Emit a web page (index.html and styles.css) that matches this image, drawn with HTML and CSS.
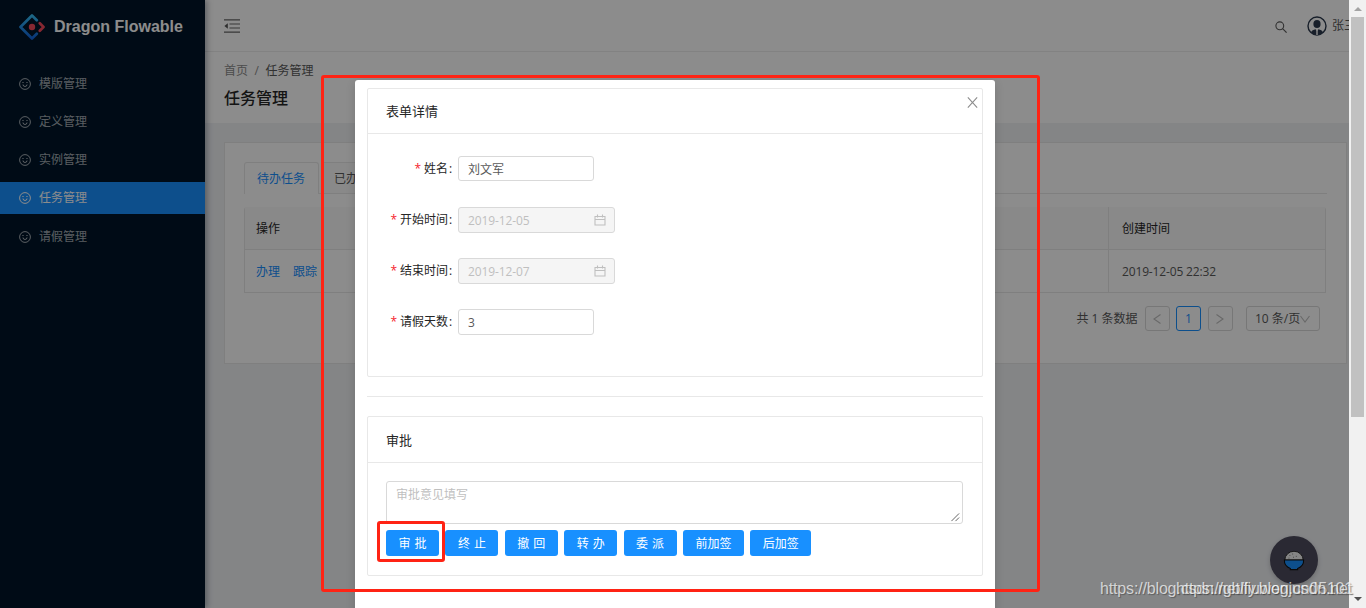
FILE: index.html
```html
<!DOCTYPE html>
<html lang="zh-CN">
<head>
<meta charset="utf-8">
<title>Dragon Flowable</title>
<link rel="stylesheet" href="styles.css">
</head>
<body>
<svg width="0" height="0" class="defs">
  <symbol id="smile" viewBox="0 0 12 12"><circle cx="6" cy="6" r="5.4" fill="none" stroke="currentColor"/><path d="M4 6.500a2 2 0 0 0 4 0" fill="none" stroke="currentColor"/><path d="M3.400 4.500h1.200M7.400 4.500h1.200" stroke="currentColor"/></symbol>
  <symbol id="calendar" viewBox="0 0 12 12"><path d="M1 2.500h10v8.500H1zM1 5.500h10M3.500.5v3M8.500.5v3" fill="none" stroke="currentColor" stroke-width="1.100"/></symbol>
</svg>
<div class="app">
  <aside class="sidebar">
    <div class="brand">
      <svg class="logo" viewBox="0 0 26 26">
        <defs><linearGradient id="lg" x1="0" y1="0" x2="0" y2="1"><stop offset="0" stop-color="#35bdf5"/><stop offset="1" stop-color="#1264db"/></linearGradient></defs>
        <path d="M17.800 6.300 13 1.500 1.500 13 13 24.500l4.800-4.800" fill="none" stroke="url(#lg)" stroke-width="2.700" stroke-linejoin="round" stroke-linecap="round"/>
        <path d="M20.800 9.300 24.500 13l-3.700 3.700" fill="none" stroke="#f5495b" stroke-width="2.700" stroke-linejoin="round" stroke-linecap="round"/>
        <circle cx="13" cy="13" r="3.200" fill="#f5495b"/>
      </svg>
      <span>Dragon Flowable</span>
    </div>
    <nav class="menu">
      <a class="item"><svg><use href="#smile"/></svg>模版管理</a>
      <a class="item"><svg><use href="#smile"/></svg>定义管理</a>
      <a class="item"><svg><use href="#smile"/></svg>实例管理</a>
      <a class="item active"><svg><use href="#smile"/></svg>任务管理</a>
      <a class="item"><svg><use href="#smile"/></svg>请假管理</a>
    </nav>
  </aside>
  <main class="main">
    <header class="topbar">
      <svg class="fold" viewBox="0 0 16 14"><path d="M0 .9h16M5.500 5h10.500M5.500 9h10.500M0 13.100h16" stroke="#666" stroke-width="1.200"/><path d="M3.800 4.300v5.400L.4 7z" fill="#555"/></svg>
      <div class="tools">
        <svg class="search" viewBox="0 0 12 12"><circle cx="4.800" cy="4.800" r="3.900" fill="none" stroke="#595959" stroke-width="1.100"/><path d="m7.600 7.600 4 4" stroke="#595959" stroke-width="1.200"/></svg>
        <svg class="avatar" viewBox="0 0 20 20"><circle cx="10" cy="10" r="9" fill="none" stroke="#2c3a4e" stroke-width="1.400"/><ellipse cx="10" cy="8" rx="3.600" ry="4.100" fill="#2c3a4e"/><path d="M3.800 16.200q1.400-2.600 4.700-2.900l1.500 1.600 1.500-1.600q3.300.3 4.700 2.900Q13.700 19 10 19t-6.200-2.800z" fill="#2c3a4e"/><path d="M10 13.500v5.500" stroke="#fff" stroke-width="1.400"/></svg>
        <span class="user">张三</span>
      </div>
    </header>
    <section class="pagehead">
      <div class="crumbs"><span>首页</span><i>/</i><b>任务管理</b></div>
      <h1>任务管理</h1>
    </section>
    <section class="panel">
      <div class="tabs"><div class="tab on">待办任务</div><div class="tab">已办任务</div></div>
      <div class="table">
        <div class="tr th"><div>操作</div><div>创建时间</div></div>
        <div class="tr"><div class="links"><a>办理</a><a>跟踪</a></div><div class="date">2019-12-05 22:32</div></div>
      </div>
      <div class="pager">
        <span class="total">共 1 条数据</span>
        <span class="pg"><svg viewBox="0 0 10 12"><path d="M8.500 1.500 2 6l6.500 4.500"/></svg></span>
        <span class="pg cur">1</span>
        <span class="pg"><svg viewBox="0 0 10 12"><path d="M1.500 1.500 8 6l-6.500 4.500"/></svg></span>
        <span class="size">10 条/页<svg viewBox="0 0 10 8"><path d="m.5 1 4.500 6 4.500-6"/></svg></span>
      </div>
    </section>
  </main>
</div>

<div class="pet">
  <svg viewBox="0 0 24 24"><path d="M2 12a10 9.500 0 0 1 20 0z" fill="#f2f2f2" stroke="#222" stroke-width="1"/><path d="M1.500 12h21a10.500 9.500 0 0 1-6.500 9.200v1.300H8v-1.300A10.500 9.500 0 0 1 1.500 12z" fill="#1890ff" stroke="#111" stroke-width="1.200"/><path d="M7 7h1M10 5.500h1M14 8h1M6 10h1M11 9h1" stroke="#777"/></svg>
</div>
<div class="mask"></div>

<div class="modal">
  <svg class="close" viewBox="0 0 10 12"><path d="m.7 1.200 8.600 9.600M9.300 1.200.7 10.800" stroke="#8c8c8c" stroke-width="1"/></svg>
  <section class="card form">
    <h2>表单详情</h2>
    <div class="fields">
      <div class="row"><label><em>*</em>姓名<span class="colon">:</span></label><div class="input first">刘文军</div></div>
      <div class="row"><label><em>*</em>开始时间<span class="colon">:</span></label><div class="input disabled">2019-12-05<svg><use href="#calendar"/></svg></div></div>
      <div class="row"><label><em>*</em>结束时间<span class="colon">:</span></label><div class="input disabled">2019-12-07<svg><use href="#calendar"/></svg></div></div>
      <div class="row"><label><em>*</em>请假天数<span class="colon">:</span></label><div class="input">3</div></div>
    </div>
  </section>
  <div class="divider"></div>
  <section class="card approve">
    <h2>审批</h2>
    <div class="approve-body">
      <div class="textarea">审批意见填写<svg viewBox="0 0 10 10"><path d="M.5 9 9 .5M5 9l4-4" stroke="#555" stroke-width="1"/></svg></div>
      <div class="buttons">
        <button class="two">审批</button><button class="two">终止</button><button class="two">撤回</button><button class="two">转办</button><button class="two">委派</button><button>前加签</button><button>后加签</button>
      </div>
    </div>
  </section>
</div>

<div class="scrollbar"><i class="up"></i><div class="thumb"></div><i class="down"></i></div>
<div class="mark large"></div>
<div class="mark small"></div>
<div class="watermark one">https://blog.csdn.net/liuwenjun05101</div>
<div class="watermark two-mark">https://gblfy.blog.csdn.net</div>
</body>
</html>
```
FILE: styles.css
```css
* { box-sizing: border-box; }
body { margin: 0; width: 1366px; height: 608px; overflow: hidden; position: relative; background: #f0f2f5; font: 12px/18px "Open Sans", "Noto Sans CJK SC", sans-serif; color: #595959; }
svg { display: block; flex: none; }
.defs { position: absolute; }
.app { display: flex; width: 1349px; height: 608px; }

.sidebar { width: 205px; flex: none; background: #001529; box-shadow: 2px 0 6px rgba(0,21,41,.35); z-index: 1; }
.brand { display: flex; align-items: center; height: 52px; padding: 2px 0 0 19px; gap: 9px; color: #fff; font: bold 16px "Liberation Sans", Arial, sans-serif; white-space: nowrap; }
.logo { width: 26px; height: 26px; }
.menu { display: flex; flex-direction: column; gap: 6.300px; padding-top: 15px; }
.item { display: flex; align-items: center; height: 32px; padding: 1px 0 0 19px; gap: 8px; color: rgba(255,255,255,.65); }
.item svg { width: 12px; height: 12px; }
.item.active { background: #1890ff; color: #fff; }

.main { flex: 1; min-width: 0; }
.topbar { display: flex; justify-content: space-between; align-items: center; height: 52px; background: #fff; border-bottom: 1px solid #ededed; padding: 1px 0 0 19px; overflow: hidden; }
.fold { width: 16px; height: 14px; }
.tools { display: flex; align-items: center; width: 74px; }
.search { width: 12px; height: 12px; margin-top: 1px; }
.avatar { width: 20px; height: 20px; margin-left: 20px; }
.user { margin-left: 5px; white-space: nowrap; }
.pagehead { height: 71px; background: #fff; padding: 9px 0 0 19px; }
.crumbs { display: flex; gap: 6.500px; color: #8c8c8c; line-height: 19px; }
.crumbs b { font-weight: 400; color: #595959; }
.crumbs i { font-style: normal; }
h1 { margin: 6px 0 0; font-size: 16px; line-height: 24px; font-weight: 500; color: #262626; }

.panel { margin: 19px 2px 0 19px; height: 222px; background: #fff; border: 1px solid #e8e8e8; padding: 19px; }
.tabs { display: flex; gap: 2px; height: 32px; border-bottom: 1px solid #e8e8e8; }
.tab { width: 75px; height: 31px; border: 1px solid #e8e8e8; border-bottom: 0; border-radius: 3px 3px 0 0; background: #fafafa; line-height: 31px; padding-left: 12px; }
.tab.on { height: 32px; background: #fff; color: #1890ff; }
.table { width: 1082px; margin-top: 13px; border: 1px solid #e8e8e8; border-top: 0; border-radius: 3px 3px 0 0; }
.tr { display: grid; grid-template-columns: 863px 1fr; height: 42px; line-height: 43px; }
.tr > div { padding-left: 11px; }
.tr > div + div { border-left: 1px solid #e8e8e8; padding-left: 13px; }
.tr.th { height: 43px; line-height: 44px; background: #fafafa; border-bottom: 1px solid #e8e8e8; color: #262626; }
.links { display: flex; gap: 13px; color: #1890ff; }
.date { letter-spacing: -.15px; }
.pager { display: flex; align-items: center; justify-content: flex-end; padding: 13px 7px 0 0; }
.total { margin-right: 7px; }
.pg { width: 25px; height: 25px; margin-right: 6.500px; border: 1px solid #d9d9d9; border-radius: 3px; display: flex; align-items: center; justify-content: center; }
.pg.cur { border-color: #1890ff; color: #1890ff; }
.pg svg { width: 10px; height: 12px; }
.pager path { fill: none; stroke: #bfbfbf; stroke-width: 1.100; }
.size { display: flex; align-items: center; width: 74px; height: 25px; margin-left: 7px; padding: 1px 0 0 8px; border: 1px solid #d9d9d9; border-radius: 3px; white-space: nowrap; }
.size svg { width: 10px; height: 8px; }

.pet { position: absolute; left: 1270px; top: 536px; width: 48px; height: 48px; border-radius: 50%; background: #4d4b5d; box-shadow: 0 2px 5px rgba(0,0,0,.2); display: flex; align-items: center; justify-content: center; z-index: 2; }
.pet svg { width: 22px; height: 22px; }
.mask { position: absolute; inset: 0 17px 0 0; background: rgba(0,0,0,.45); z-index: 3; }

.modal { position: absolute; left: 355px; top: 80px; width: 640px; height: 540px; padding: 8px 12px; background: #fff; border-radius: 3px; box-shadow: 0 3px 10px rgba(0,0,0,.15); z-index: 4; }
.close { position: absolute; left: 612px; top: 16px; width: 11px; height: 13px; }
.card { border: 1px solid #e8e8e8; border-radius: 2px; }
.card h2 { margin: 0; padding-left: 18px; height: 45px; line-height: 45px; border-bottom: 1px solid #e8e8e8; font-size: 13px; font-weight: 400; color: #262626; }
.form { height: 289px; }
.fields { padding-top: 22px; }
.row { display: flex; height: 51px; align-items: flex-start; }
.row label { width: 85px; margin-right: 5px; text-align: right; line-height: 26px; color: #262626; white-space: nowrap; }
.row em { font-style: normal; color: #f5222d; margin-right: 3px; }
.colon { display: inline-block; width: 5px; text-align: center; }
.input { display: flex; align-items: center; width: 136px; height: 26px; padding: 1px 8px 0 9px; border: 1px solid #d9d9d9; border-radius: 3px; background: #fff; }
.input.first { height: 25px; padding-top: 2px; }
.disabled { width: 157px; background: #f5f5f5; color: #bfbfbf; justify-content: space-between; letter-spacing: -.1px; }
.disabled svg { width: 12px; height: 12px; margin-top: -2px; }
.divider { height: 1px; margin: 19px 0; background: #e8e8e8; }
.approve { height: 160px; }
.card.approve h2 { height: 46px; line-height: 46px; }
.approve-body { padding: 18px; }
.textarea { position: relative; width: 577px; height: 43px; border: 1px solid #d9d9d9; border-radius: 3px; padding: 4px 9px; color: #bfbfbf; }
.textarea svg { position: absolute; right: 2px; bottom: 1px; width: 9px; height: 9px; }
.buttons { display: flex; gap: 6.400px; margin-top: 6px; }
button { width: 61px; height: 26px; padding: 1px 0 0; border: 0; border-radius: 3px; background: #1890ff; color: #fff; font: inherit; line-height: 26px; text-align: center; }
button.two { width: 53px; letter-spacing: 4px; padding-left: 4px; }

.scrollbar { position: absolute; right: 0; top: 0; width: 17px; height: 608px; background: #f1f1f1; z-index: 5; display: flex; flex-direction: column; align-items: center; }
.thumb { width: 13px; height: 400px; background: #c1c1c1; }
.up { margin: 7px 0 6px; border: 4px solid transparent; border-top: 0; border-bottom-color: #a3a3a3; }
.down { margin-top: 180px; border: 4px solid transparent; border-bottom: 0; border-top-color: #505050; }
.mark { position: absolute; border: 3px solid #ff2314; border-radius: 3px; z-index: 6; }
.large { left: 321px; top: 75px; width: 719px; height: 517px; }
.small { left: 377px; top: 521px; width: 68px; height: 41px; }
.watermark { position: absolute; top: 580px; font: 16px/18px "Liberation Sans", Arial, sans-serif; letter-spacing: -.16px; color: rgba(255,255,255,.7); text-shadow: 1px 1px 1px rgba(0,0,0,.3); white-space: nowrap; z-index: 7; }
.one { left: 1100px; }
.two-mark { left: 1176px; }
```
